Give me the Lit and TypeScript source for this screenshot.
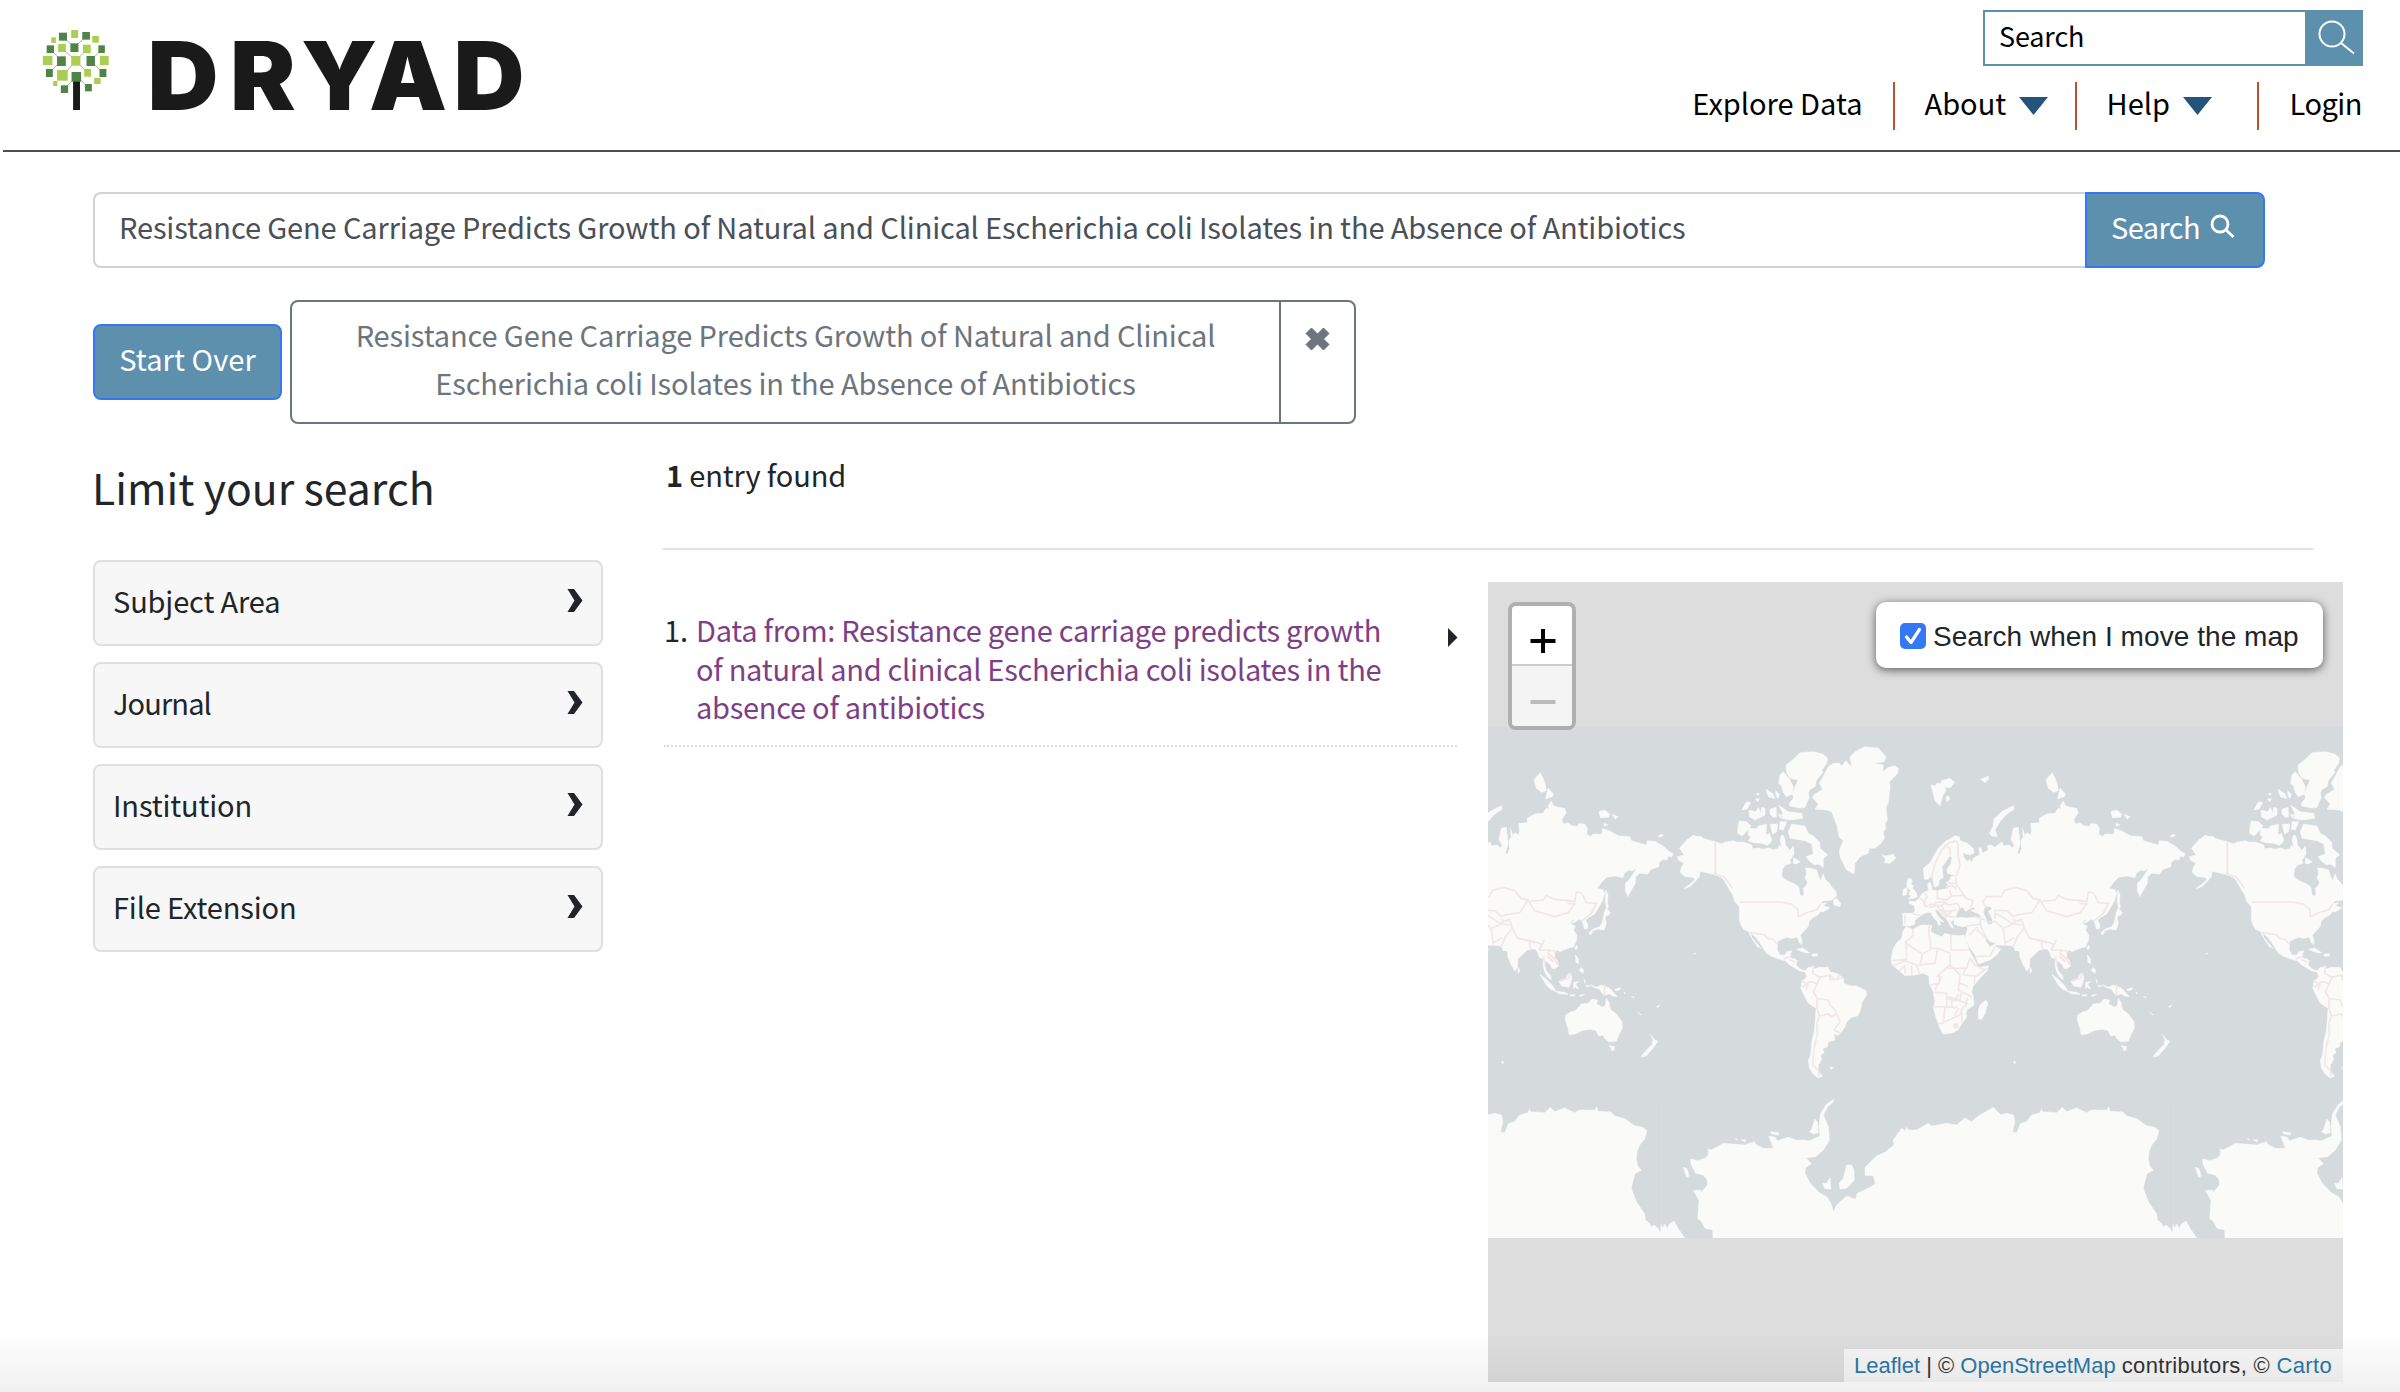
import { LitElement, html, svg, css } from "lit";
import { customElement, property } from "lit/decorators.js";

const QUERY =
  "Resistance Gene Carriage Predicts Growth of Natural and Clinical Escherichia coli Isolates in the Absence of Antibiotics";

type Leaf = [number, number, number, number, "dark" | "light"];

const LEAVES: Leaf[] = [
  [154, 98, 21, 24, "dark"], [186, 90, 18, 24, "light"], [215, 96, 20, 23, "dark"],
  [134, 112, 12, 17, "light"], [241, 108, 17, 20, "light"], [122, 136, 19, 23, "dark"],
  [152, 132, 20, 24, "light"], [184, 130, 21, 26, "dark"], [217, 134, 20, 25, "light"],
  [257, 136, 17, 23, "dark"], [112, 168, 25, 27, "light"], [149, 169, 23, 29, "dark"],
  [186, 168, 24, 29, "light"], [226, 168, 22, 30, "dark"], [261, 168, 23, 27, "light"],
  [120, 207, 18, 24, "dark"], [149, 210, 28, 32, "light"], [220, 207, 18, 23, "light"],
  [260, 207, 18, 24, "dark"], [187, 216, 25, 29, "dark"], [246, 234, 17, 18, "light"],
  [139, 243, 11, 15, "light"], [159, 256, 19, 23, "dark"], [222, 252, 18, 22, "dark"],
];

/* Land outlines, split by the sheet each one was plotted on. */
const LAND_WEST = [
  "M640,346L650,349 665,350 668,355 706,365 725,372 735,366 760,362 770,366 790,366 815,374 818,386 835,384 850,388 866,384 880,389 895,386 897,376 905,380 900,362 903,348 910,346 915,360 916,375 925,385 928,392 940,378 942,402 930,420 932,430 915,436 907,448 905,468 912,476 930,486 945,492 957,502 960,525 968,529 972,520 970,505 980,495 982,485 975,475 980,460 976,445 990,444 1010,450 1015,468 1022,482 1030,462 1036,478 1048,490 1056,502 1068,515 1070,528 1055,540 1030,543 1020,552 1040,548 1030,558 1050,563 1040,570 1030,575 1020,575 1013,585 1000,592 988,602 984,620 968,638 961,645 966,660 965,675 958,668 952,652 935,655 920,652 905,658 893,664 892,690 900,705 915,705 920,695 936,692 930,705 932,715 945,716 952,722 948,735 962,748 975,752 985,742 990,748 975,757 958,752 945,745 930,735 915,722 890,715 872,708 860,700 850,686 840,668 826,650 812,640 815,652 828,668 843,685 832,680 820,662 810,646 805,634 790,628 782,612 778,598 778,560 765,545 758,525 750,512 742,498 730,478 720,470 700,463 680,458 660,454 658,470 645,485 630,500 610,507 630,492 645,480 640,472 615,470 600,455 605,440 612,430 595,420 592,410 612,405 598,385 620,360Z",
  "M1060,540L1070,535 1082,550 1080,560 1062,555ZM935,312L975,318 985,340 1003,350 1020,368 1020,385 1043,405 1030,415 1030,442 1015,432 1005,435 990,425 978,410 1000,402 995,372 975,362 950,358 930,355 925,335ZM940,412L960,425 950,432 940,430Z",
  "M805,325L830,326 835,318 860,313 858,345 868,340 876,360 870,370 862,376 845,370 820,368 805,362 812,352 805,345ZM777,303L800,305 813,318 795,340 785,348 772,338Z",
  "M918,135L940,118 960,98 1000,95 1030,103 1043,115 1040,130 1026,150 1028,158 1010,180 1005,200 990,208 985,220 988,232 975,262 960,264 930,258 928,250 940,235 938,225 945,200 955,180 930,175 920,158ZM910,155L930,180 940,200 938,222 920,230 910,218 905,200 896,190 900,165Z",
  "M808,270L828,275 835,262 842,280 845,262 855,265 855,285 825,300 808,290ZM785,270L800,245 812,248 800,268ZM870,268L888,262 890,290 880,292 870,282ZM895,255L925,275 965,280 968,295 930,300 905,295 908,278ZM858,208L880,222 884,236 865,230ZM825,238L838,235 835,245ZM870,312L893,312 890,335 878,343ZM900,305L920,305 910,330 898,328ZM887,212L898,222 895,235 888,230ZM828,220L838,220 834,227ZM895,283L905,285 902,295Z",
  "M1140,88L1155,80 1195,84 1218,110 1212,125 1178,130 1210,135 1208,155 1225,142 1245,138 1255,145 1253,160 1228,186 1230,200 1225,250 1218,262 1222,300 1215,312 1218,325 1210,335 1213,355 1203,370 1185,385 1168,385 1165,400 1140,410 1125,430 1122,462 1100,450 1080,410 1078,390 1090,362 1077,350 1072,320 1055,275 1040,270 1005,268 1015,252 997,232 1005,222 1028,208 1018,190 1045,140 1060,130 1078,130 1085,138 1098,122 1115,142 1110,110 1125,95ZM1205,404L1218,408 1240,402 1247,415 1230,430 1212,428 1217,418Z",
  "M985,745L1000,737 1005,748 1015,742 1045,742 1050,755 1075,762 1090,775 1092,790 1110,797 1130,798 1158,812 1160,825 1145,848 1142,870 1134,887 1115,892 1100,905 1095,920 1085,935 1075,946 1062,942 1065,960 1045,966 1042,980 1028,986 1032,998 1022,1005 1025,1018 1015,1035 1015,1055 1028,1068 1015,1074 1000,1062 988,1045 985,1020 992,1005 995,965 1002,940 1005,910 1008,865 985,850 972,825 962,805 966,785 980,770 976,755ZM1048,1042L1060,1042 1055,1048ZM948,688L968,684 990,699 975,698ZM995,702L1012,701 1012,708 997,709Z",
];

const LAND_EAST = [
  "M225,347L238,350 240,362 262,370 280,385 282,400 268,405 248,398 252,412 262,425 270,418 275,428 280,415 292,408 300,404 296,385 304,383 306,400 325,390 322,378 333,375 345,382 365,366 372,378 385,375 400,384 402,375 393,358 400,325 415,322 418,350 420,372 412,400 418,403 425,385 422,365 430,350 427,325 434,345 442,338 450,345 455,335 452,310 478,308 478,295 500,282 525,280 535,265 545,268 540,258 550,243 556,256 570,262 590,265 595,278 580,300 588,312 600,308 612,318 632,318 630,311 650,312 658,325 656,342 668,350 675,342 703,343 703,325 725,333 750,347 785,350 790,362 805,367 835,375 838,362 860,364 885,378 900,392 916,402 910,412 902,408 896,420 885,418 872,428 873,440 850,448 838,462 815,460 803,470 802,490 790,510 780,530 772,510 772,490 785,478 808,442 795,452 785,450 770,458 765,473 740,468 715,472 700,488 687,505 705,510 710,520 702,545 690,565 680,582 665,590 652,600 659,612 660,625 650,628 645,612 642,600 632,598 622,606 612,610 620,598 610,602 608,612 622,618 616,630 627,645 625,662 617,680 600,685 575,695 568,690 560,696 560,712 568,722 572,738 560,746 552,745 548,735 540,728 532,722 530,735 535,752 548,768 550,780 540,772 530,757 525,735 526,716 515,713 508,695 500,686 485,690 478,690 460,707 450,715 448,745 440,752 430,735 420,712 418,692 405,692 400,678 375,676 350,675 345,668 330,665 322,655 314,650 318,665 325,672 328,680 340,675 346,670 350,682 362,688 350,705 330,720 295,732 285,705 268,680 256,655 258,640 262,630 262,618 250,620 235,618 222,612 222,600 240,592 262,594 285,592 304,596 300,585 292,580 280,575 272,572 285,566 283,561 265,568 258,575 248,562 238,566 230,580 228,590 235,598 220,598 215,605 208,600 222,625 212,620 205,605 198,595 185,585 178,575 172,568 165,573 175,590 192,606 178,602 182,612 176,618 172,605 160,592 152,577 140,578 130,582 118,590 105,600 105,612 90,618 70,617 68,580 100,580 105,570 103,557 88,550 88,543 105,545 118,535 125,522 135,515 145,512 143,492 150,485 155,497 155,510 170,512 190,508 205,505 203,492 198,488 210,480 212,470 220,467 232,465 215,464 202,460 200,450 212,432 216,412 208,408 198,425 186,440 188,460 190,472 178,480 176,495 165,502 160,490 158,472 148,470 145,478 133,478 130,445 150,428 160,410 175,385 195,365 210,356Z",
  "M78,620L98,628 125,615 148,616 155,617 152,635 165,642 185,650 195,640 212,645 240,647 252,645 262,672 272,700 284,720 292,738 300,742 325,737 322,752 300,775 280,797 275,815 280,830 282,855 262,868 258,880 260,892 245,912 235,928 220,938 190,943 185,935 172,905 160,865 165,845 160,815 148,792 147,768 130,760 105,765 75,767 55,750 37,735 33,722 38,690 50,668 65,655 68,635Z",
  "M85,475L95,477 97,485 92,492 100,497 98,505 108,517 113,530 100,535 85,537 94,527 86,524 92,512 83,505 80,492ZM70,508L80,503 82,515 78,525 68,527ZM153,195L168,198 170,190 190,190 198,212 188,228 180,258 165,242ZM183,182L210,175 224,188 210,203 192,200ZM198,230L205,228 210,238 200,245ZM302,178L325,168 325,178 315,188Z",
  "M400,257L402,268 380,282 360,305 345,330 352,350 335,348 328,340 340,318 342,298 365,275ZM517,158L530,185 535,212 520,217 505,205 498,180ZM540,205L557,222 553,230 533,236ZM693,275L710,270 725,282 722,292 697,293ZM733,283L750,290 742,298ZM708,310L720,315 708,318ZM870,348L880,342 886,347 875,352Z",
  "M713,510L720,525 718,550 722,560 716,568 712,545ZM715,565L728,578 722,585 711,590 715,610 708,630 690,627 675,632 668,645 662,638 680,625 695,620 702,608 707,588 709,575ZM318,840L323,852 315,880 305,898 295,897 295,870 300,855ZM450,742L456,752 450,760Z",
  "M516,763L535,778 555,798 562,812 550,810 535,795ZM560,813L590,817 600,823 575,822ZM605,758L612,768 608,790 602,802 580,797 573,785 590,778ZM617,787L632,785 622,792 632,805 627,806 621,798 617,808ZM622,705L630,715 632,730 624,728ZM638,742L647,750 645,760 634,752ZM625,676L629,680 625,690 620,685Z",
  "M668,795L685,801 700,795 725,805 735,815 748,830 735,828 722,822 713,826 702,820 695,808 680,803ZM606,824L620,824 618,828 606,827ZM635,826L650,822 636,830ZM740,808L758,803 755,810 744,812ZM648,778L653,784 650,790ZM652,797L668,797 660,800ZM768,816L773,820 770,821ZM790,828L801,833 797,834ZM808,875L821,885 816,883ZM866,860L876,855 870,863ZM402,1023L408,1027 403,1032ZM978,699L984,700 980,703Z",
  "M592,887L605,877 622,872 640,852 660,850 672,838 690,840 685,852 705,862 712,855 715,835 722,845 727,868 745,882 762,905 763,925 750,950 745,963 722,965 710,955 705,945 692,948 685,932 668,928 640,932 622,942 603,944 600,925 592,900ZM725,977L740,980 738,990 732,992ZM847,943L860,960 869,963 862,975 856,982 852,972 855,960ZM850,975L857,982 835,1008 820,1010 828,998Z",
];

const LAND_SOUTH = [
  "M189,444L188,420 165,415 155,395 143,385 147,330 130,302 150,300 155,306 172,285 172,270 160,255 137,250 122,220 122,207 143,212 165,205 175,195 175,178 185,180 220,160 285,165 312,155 320,165 340,175 370,175 357,138 375,142 383,152 415,142 440,150 460,150 478,153 510,138 507,105 512,70 530,42 552,28 550,35 532,52 520,75 535,110 538,150 520,180 497,200 468,203 484,222 467,232 465,250 480,280 508,308 530,320 543,340 550,366 560,345 590,318 617,328 622,310 650,297 676,282 670,257 645,256 645,232 680,198 705,187 732,165 730,150 755,115 765,122 770,112 775,120 800,120 835,100 845,108 890,100 920,105 945,84 965,95 985,78 1030,52 1052,74 1070,70 1090,75 1095,95 1088,125 1100,128 1112,100 1130,95 1145,75 1170,68 1174,58 1178,65 1220,68 1237,52 1250,65 1280,54 1310,68 1325,60 1372,60 1376,50 1380,64 1418,66 1430,78 1460,86 1490,107 1515,112 1527,122 1520,148 1505,165 1497,185 1495,210 1500,230 1510,240 1490,252 1480,295 1495,335 1520,372 1522,390 1535,400 1538,412 1548,405 1560,415 1566,425 1570,403 1574,415 1580,402 1588,416 1594,402 1608,393 1620,415 1640,444Z",
  "M100,232L110,235 118,258 110,262ZM485,118L495,88 502,95 505,128 490,132 478,125ZM590,225L605,225 612,240 613,270 590,295 570,297 567,280 580,265ZM517,280L530,280 540,263 543,297 525,296ZM362,125L385,128 385,135 365,132ZM274,149L288,150 284,156ZM255,145L262,148 260,151Z",
];

const BORDERS_WEST =
  "M706,366V462L730,470 740,480 755,503M780,546H900L935,552 955,570V590L985,576 1010,570 1020,555M810,638L855,645 862,655 880,658 890,670M912,716L925,712 935,706M930,720L945,726M1000,740L998,760 1020,772 1050,765 1062,778 1090,773M1020,772L1012,790 990,785 970,800M1012,790L1000,815 1012,835 1045,840 1050,855 1065,870 1080,905M1012,835L1010,860 1018,888 1045,882 1055,890 1068,882M1080,905L1062,930 1082,940M1018,890L1010,910 1012,940 1003,980 998,1035 1015,1050 1017,1068M1050,765V780H1062M1075,765V780M965,782L985,795 978,808";

const BORDERS_EAST =
  "M155,475L165,430 185,390 205,370 228,362 235,375 233,400 240,435 230,465M195,375L210,385V405M226,468L230,495 245,515 258,535 280,542 272,562M205,488L225,492M200,500L215,497 228,505M210,512L215,528 250,526M172,512V535L200,540 212,530M135,520L142,530 130,545 137,560 155,552 180,558 200,548M120,535L135,545M165,548L190,545 205,555 232,550 240,565M150,562L170,556 180,570 205,575 228,570M185,555L192,575 205,590 225,590M180,572L198,590M200,590L212,578M75,585V612M100,582L120,586M318,560L308,545 320,530 365,530 372,512 405,502 440,512 460,535 480,540 455,578 410,585 400,590 380,572 345,572 345,595M480,545L525,540 535,527 560,538 600,542 620,545 625,517 640,517 655,548 685,550 670,580 645,600M485,548L500,572 560,590 600,578 620,552 600,550M440,512L455,530M400,680L412,650 432,625 428,605 400,600M435,628L450,655 500,665 520,672 515,690H545L565,695M500,668L485,664 450,655M485,670L488,690M528,662L520,680M545,690L540,700 558,715 570,735M527,712L530,735M540,710L555,725M300,590L302,618 320,655M320,606L345,605 370,625 375,672M370,625L400,612 425,615M375,670L400,655M345,580L365,590 395,610 425,598M262,618L300,612M285,590L315,600M268,645L290,622M292,630L320,656M290,710L330,708 345,680M98,628L100,645 75,668M78,665L80,718 38,722M80,672L128,702 155,685 175,685M148,616L146,640 152,665V685M175,685L210,700V735L170,770M213,645V690H268M210,735L240,765M40,738L75,722 110,735 118,760M60,750L75,738M75,738V760M95,738V760M118,735L165,730 172,690M128,702L120,735M205,745L260,745 270,715M270,715L285,735 312,750M255,745L250,765 290,768 320,745M285,768L283,790M240,768L235,810 275,830M185,770L165,810M165,817L200,820V860M160,860L230,862M200,830L240,840 245,815M195,862L190,910H178M195,905L240,885 250,860M230,840L262,850M235,865L225,885M178,768V790L150,795M240,790L262,798M262,835L256,860M246,880V905M710,795V825M578,782L600,775 608,762M200,835L225,842 235,825M215,842V860";

@customElement("world-map")
export class WorldMap extends LitElement {
  static styles = css`
    :host { display: block; background: #d5dadd; height: 512px; }
    svg { display: block; width: 855px; height: 512px; }
    .land { fill: #fafaf8; stroke: #fafaf8; stroke-width: 1.5; stroke-linejoin: round; }
    .water { fill: #d5dadd; }
    .border { fill: none; stroke: #f1e6e8; stroke-width: 5; stroke-linejoin: round; stroke-linecap: round; }
    .dot { fill: #f1e6e8; }
    .dateline { stroke: #dbdfe1; stroke-width: 2; }
  `;
  private world(offset: number) {
    return svg`<g transform="translate(${offset} 0)">
      <g class="land">
        ${LAND_WEST.map((d) => svg`<path d=${d} />`)}
        <g transform="translate(1200 0)">${LAND_EAST.map((d) => svg`<path d=${d} />`)}</g>
        <g transform="translate(510 1110)">${LAND_SOUTH.map((d) => svg`<path d=${d} />`)}</g>
      </g>
      <path class="water" d="M1515,562L1532,560 1535,568 1524,574 1530,585 1536,598 1536,612 1524,613 1519,596 1510,577Z" />
      <path class="border" d=${BORDERS_WEST} />
      <g transform="translate(1200 0)"><path class="border" d=${BORDERS_EAST} /><circle class="dot" cx="228" cy="918" r="8" /></g>
      <path class="dateline" d="M541,1152V1535" />
    </g>`;
  }
  render() {
    return html`<svg viewBox="24 18 2565 1536" preserveAspectRatio="none">
      ${[-1536, 0, 1536].map((o) => this.world(o))}
    </svg>`;
  }
}

@customElement("facet-card")
export class FacetCard extends LitElement {
  @property() label = "";
  @property({ type: Boolean }) tight = false;
  static styles = css`
    :host {
      display: flex; align-items: center; justify-content: space-between; box-sizing: border-box;
      height: 86px; padding: 0 18px 6px 18px; background: #f7f7f7; border: 2px solid #dfdfdf; border-radius: 8px;
    }
    .tight { letter-spacing: -0.9px; }
    svg { width: 16px; height: 23px; }
  `;
  render() {
    return html`<span class=${this.tight ? "tight" : ""}>${this.label}</span>
      <svg viewBox="0 0 16 23"><path d="M0.5 0H7L15.5 11.5 7 23H0.5L7.5 11.5Z" fill="#212529" /></svg>`;
  }
}

@customElement("app-root")
export class AppRoot extends LitElement {
  static styles = css`
    :host {
      display: block; position: relative; box-sizing: border-box; width: 2400px; height: 1392px; overflow: hidden;
      background: #fff; color: #212529; font: 400 29px/48px "Noto Sans CJK SC", "Open Sans", sans-serif; letter-spacing: -0.15px;
    }
    * { box-sizing: border-box; }
    a { text-decoration: none; color: inherit; }
    header { display: flex; justify-content: space-between; height: 152px; margin-left: 3px; padding: 10px 37px 0 37px; border-bottom: 2px solid #4d4d4f; }
    .brand { display: block; width: 500px; height: 132px; }
    .wordmark { font: 900 94.5px Inter, sans-serif; fill: #1a1a1a; letter-spacing: 0; }
    .leaf-dark { fill: #4f8446; }
    .leaf-light { fill: #aace52; }
    .right { display: flex; flex-direction: column; align-items: flex-end; gap: 16px; color: #000; }
    .site-search { display: flex; width: 380px; height: 56px; border: 2px solid #5d90ad; }
    .site-search .field { flex: 1; padding: 0 14px; font-size: 27px; line-height: 48px; }
    .site-search .go { width: 56px; background: #5d90ad; }
    .go svg { display: block; width: 55px; height: 52px; }
    nav { display: flex; height: 48px; line-height: 41px; }
    nav a { display: flex; padding: 0 30px; border-right: 2px solid #c0522d; white-space: nowrap; letter-spacing: 0; }
    nav a:last-child { border: 0; padding-right: 1px; padding-left: 31px; letter-spacing: -0.5px; }
    nav .about, nav .help { width: 182px; padding-right: 0; }
    nav svg { width: 29px; height: 18px; margin: 15px 0 0 13px; }

    main { padding: 40px 56px 0 93px; }
    .query { display: flex; width: 2172px; height: 76px; }
    .query .field { flex: 1; padding: 0 24px; border: 2px solid #ced4da; border-right: 0; border-radius: 8px 0 0 8px; line-height: 65px; color: #495057; letter-spacing: -0.12px; }
    .btn { display: flex; background: #5d90ad; border: 2px solid #3478f6; border-radius: 8px; color: #fff; height: 76px; line-height: 65px; justify-content: center; letter-spacing: 0.1px; }
    .query .btn { width: 180px; border-radius: 0 8px 8px 0; gap: 10px; justify-content: flex-start; padding-left: 24px; letter-spacing: -0.6px; }
    .query .btn svg { width: 25px; height: 25px; margin-top: 20px; }
    .constraints { display: flex; align-items: center; gap: 8px; margin-top: 32px; }
    .start { width: 189px; }
    .filter { display: flex; width: 1066px; height: 124px; border: 2px solid #6c757d; border-radius: 8px; color: #6c757d; }
    .filter .value { flex: 1; border-right: 2px solid #6c757d; padding: 8px 60px 0; text-align: center; letter-spacing: -0.12px; }
    .filter .remove { width: 73px; padding: 25px 0 0 24px; }
    .remove svg { display: block; width: 25px; height: 24px; }

    .columns { display: grid; grid-template-columns: 510px 1650px; column-gap: 60px; }
    .facets { display: flex; flex-direction: column; gap: 16px; }
    h2 { margin: 30px 0 42px -1px; font-weight: 400; font-size: 42.7px; line-height: 64px; height: 64px; letter-spacing: 0; }
    .count { margin: 26px 0 0 3px; height: 98px; }
    .count b { font-weight: 700; }
    .rule { border-top: 2px solid #dee2e6; }
    .results { display: grid; grid-template-columns: 794px 855px; column-gap: 31px; padding-top: 32px; }
    .entry { display: grid; grid-template-columns: 32px 1fr 9px; margin-top: 28px; height: 137px; border-bottom: 2px dotted #dcdcdc; margin-left: 1px; line-height: 38.5px; padding-bottom: 22px; }
    .entry a { color: #7f3f86; width: 700px; letter-spacing: -0.27px; }
    .entry svg { width: 10px; height: 19px; margin-top: 18px; }
    .map { position: relative; height: 800px; background: #ddd; padding-top: 144px; }
    .zoom { position: absolute; left: 20px; top: 20px; width: 68px; height: 128px; border: 4px solid rgba(0, 0, 0, 0.2); border-radius: 8px; background-clip: padding-box; background-color: #fff; overflow: hidden; }
    .zoom span { display: flex; align-items: center; justify-content: center; height: 60px; }
    .zoom .in { border-bottom: 2px solid #ccc; }
    .zoom .out { background: #f4f4f4; }
    .zoom svg { width: 26px; height: 26px; margin: 12px 0 0 2px; }
    .follow { position: absolute; right: 20px; top: 20px; width: 447px; height: 66px; border-radius: 10px; background: #fff; box-shadow: 0 2px 10px rgba(0, 0, 0, 0.6); display: flex; align-items: center; gap: 7px; padding: 4px 0 0 24px; font: 28px "Liberation Sans", Arial, sans-serif; letter-spacing: 0.06px; white-space: nowrap; }
    .follow svg { width: 26px; height: 26px; margin-bottom: 2px; }
    .credit { position: absolute; right: 0; bottom: 0; width: 499px; height: 33px; background: rgba(255, 255, 255, 0.7); font: 22px/33px "Liberation Sans", Arial, sans-serif; color: #333; letter-spacing: 0; padding-left: 10px; white-space: nowrap; }
    .credit a { color: #2b77a8; }
    .credit .wide { letter-spacing: 0.33px; }
    .fade { position: absolute; left: 0; right: 0; bottom: 0; height: 60px; background: linear-gradient(rgba(0, 0, 0, 0), rgba(0, 0, 0, 0.06)); }
  `;

  private logo() {
    return html`<svg class="brand" viewBox="40 10 500 132">
      <g transform="scale(0.3827 0.33333)">
        <path d="M164,110L195,142 225,108M132,148L160,182 130,218M162,145L198,182 228,148M266,148L237,182 268,218M163,228L198,182 229,218M168,268L199,228 231,262" fill="none" stroke="#8fbb62" stroke-width="2.4" />
        <rect x="191" y="242" width="18" height="88" fill="#1a1a1a" />
        ${LEAVES.map(([x, y, w, h, tone]) => svg`<rect class="leaf-${tone}" x=${x} y=${y} width=${w} height=${h} />`)}
      </g>
      <text class="wordmark" transform="scale(1.04 1)" x="141.8 221.2 289.4 354.8 436.1" y="110">DRYAD</text>
    </svg>`;
  }

  private caret() {
    return html`<svg viewBox="0 0 29 18"><path d="M0 0H29L14.5 18Z" fill="#24547e" /></svg>`;
  }

  render() {
    return html`
      <header>
        ${this.logo()}
        <div class="right">
          <div class="site-search">
            <span class="field">Search</span>
            <span class="go"><svg viewBox="0 0 55 52" fill="none" stroke="#fff" stroke-width="2"><circle cx="27" cy="22" r="12.5" /><path d="M36 31L49 41.5" /></svg></span>
          </div>
          <nav>
            <a>Explore Data</a>
            <a class="about">About${this.caret()}</a>
            <a class="help">Help${this.caret()}</a>
            <a>Login</a>
          </nav>
        </div>
      </header>
      <main>
        <div class="query">
          <div class="field">${QUERY}</div>
          <div class="btn">Search<svg viewBox="0 0 25 25" fill="none" stroke="#fff" stroke-width="2.8"><circle cx="10" cy="10" r="8" /><path d="M15.5 15.5L23.5 23" /></svg></div>
        </div>
        <div class="constraints">
          <a class="btn start">Start Over</a>
          <div class="filter">
            <span class="value">${QUERY}</span>
            <span class="remove"><svg viewBox="0 0 25 24"><path d="M6.5 1L12.5 7 18.5 1 24 6.5 18.5 12 24 17.5 18.5 23 12.5 17 6.5 23 1 17.5 6.5 12 1 6.5Z" fill="#6c757d" stroke="#6c757d" stroke-linejoin="round" /></svg></span>
          </div>
        </div>
        <div class="columns">
          <aside>
            <h2>Limit your search</h2>
            <div class="facets">
              <facet-card label="Subject Area"></facet-card>
              <facet-card label="Journal" tight></facet-card>
              <facet-card label="Institution"></facet-card>
              <facet-card label="File Extension"></facet-card>
            </div>
          </aside>
          <section>
            <div class="count"><b>1</b> entry found</div>
            <div class="rule"></div>
            <div class="results">
              <div>
                <div class="entry">
                  <span>1.</span>
                  <a>Data from: Resistance gene carriage predicts growth of natural and clinical Escherichia coli isolates in the absence of antibiotics</a>
                  <svg viewBox="0 0 10 19"><path d="M0 0L9.5 9.5 0 19Z" fill="#212529" /></svg>
                </div>
              </div>
              <div class="map">
                <world-map></world-map>
                <div class="zoom">
                  <span class="in"><svg viewBox="0 0 26 26"><path d="M13 1V25M0.5 13H25.5" stroke="#000" stroke-width="4" /></svg></span>
                  <span class="out"><svg viewBox="0 0 26 26"><path d="M0.5 13H25.5" stroke="#bbb" stroke-width="4" /></svg></span>
                </div>
                <div class="follow">
                  <svg viewBox="0 0 26 26"><rect width="26" height="26" rx="5" fill="#3478f6" /><path d="M6.5 14L11 19.5 19.5 6.5" fill="none" stroke="#fff" stroke-width="3.2" stroke-linecap="round" stroke-linejoin="round" /></svg>
                  Search when I move the map
                </div>
                <div class="credit"><a>Leaflet</a> | © <a>OpenStreetMap</a> <span class="wide">contributors, © <a>Carto</a></span></div>
              </div>
            </div>
          </section>
        </div>
      </main>
      <div class="fade"></div>
    `;
  }
}
